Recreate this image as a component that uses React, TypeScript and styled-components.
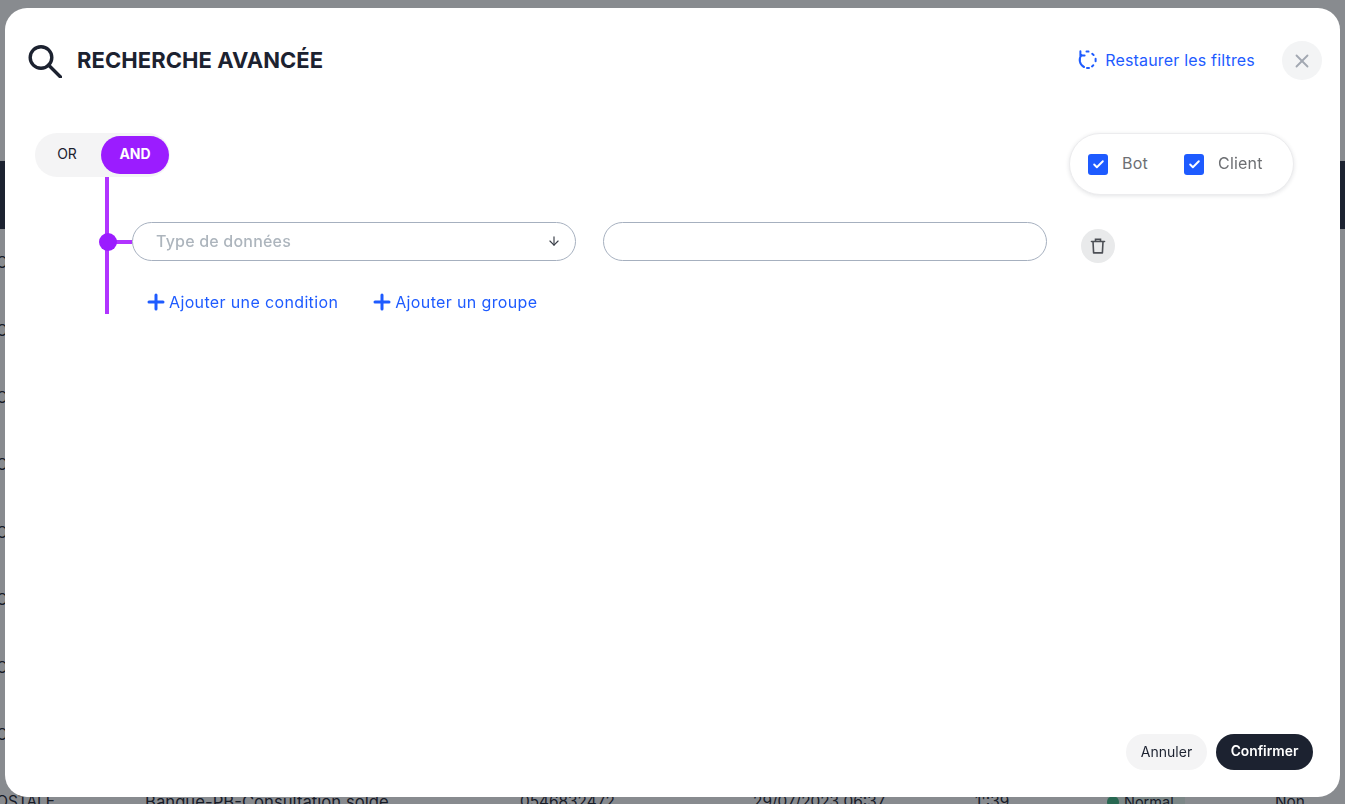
import React from 'react'
import styled, { createGlobalStyle } from 'styled-components'
import { ArrowDown, Check, Plus, X } from 'lucide-react'

const GlobalStyle = createGlobalStyle`
  html, body {
    margin: 0;
    height: 100%;
    overflow: hidden;
    background: #fff;
    font-family: Inter, "Open Sans", sans-serif;
    color: #1c2230;
  }
  * { box-sizing: border-box; }
`

const Page = styled.div`
  padding-top: 161px;
  height: 804px;
  overflow: hidden;
`

const TableHead = styled.div`
  position: relative;
  z-index: 2;
  height: 68px;
  background: #1c2230;
  color: #b9c4d6;
  font-size: 15px;
  display: flex;
  align-items: center;
`

const Row = styled.div`
  display: grid;
  grid-template-columns: 145px 375px 233px 222px 132px 168px 70px;
  align-items: center;
  height: 67.4px;
  font-size: 15.4px;
  white-space: nowrap;
`

const Clipped = styled.div`
  display: flex;
  justify-content: flex-end;
  width: 145px;
  overflow: hidden;
  padding-right: 90px;
`

const Service = styled.div`
  font-size: 16.7px;
`

const Status = styled.div`
  display: flex;
  align-items: center;
  gap: 5px;
  width: 78px;
  font-size: 14.5px;
  background: #e6f6ef;
  border-radius: 4px;
  &::before {
    content: '';
    width: 12px;
    height: 12px;
    border-radius: 50%;
    background: #3fb984;
  }
`

const Backdrop = styled.div`
  position: fixed;
  inset: 0;
  z-index: 1;
  background: rgba(17, 23, 31, 0.5);
`

const Overlay = styled.div`
  position: fixed;
  inset: 0;
  z-index: 3;
  padding: 8px 5px 7px;
`

const Dialog = styled.div`
  height: 100%;
  background: #fff;
  border-radius: 22px;
  display: flex;
  flex-direction: column;
`

const Header = styled.header`
  display: flex;
  align-items: center;
  padding: 33px 18px 0 23px;
`

const Title = styled.h1`
  margin: 0 0 2px 15px;
  font-size: 22px;
  font-weight: 700;
  letter-spacing: 0.06px;
  color: #1c2230;
  flex: 1;
`

const Restore = styled.button`
  display: flex;
  align-items: center;
  gap: 8px;
  border: 0;
  padding: 0 0 2px;
  background: none;
  color: #1e5bff;
  font: 400 16px Inter, sans-serif;
  letter-spacing: 0.18px;
`

const CloseButton = styled.button`
  width: 40px;
  height: 39px;
  margin-left: 27px;
  border: 0;
  border-radius: 50%;
  padding: 0;
  display: grid;
  place-items: center;
  background: #f3f4f5;
  color: #a2a8b1;
`

const Body = styled.main`
  flex: 1;
  margin-top: 53px;
  padding: 0 46px 0 30px;
`

const TopRow = styled.div`
  display: flex;
  justify-content: space-between;
  align-items: flex-start;
  height: 44px;
`

const Toggle = styled.div`
  width: 135px;
  height: 44px;
  padding: 3px 1px 3px 0;
  border-radius: 22px;
  background: #f4f4f5;
  display: flex;
  justify-content: space-between;
`

const ToggleOption = styled.button<{ $active?: boolean }>`
  width: ${p => (p.$active ? '68px' : '64px')};
  border: 0;
  padding: 0 0 3px;
  border-radius: 19px;
  font: ${p => (p.$active ? 700 : 400)} 14px Inter, sans-serif;
  background: ${p => (p.$active ? '#9b1cff' : 'transparent')};
  color: ${p => (p.$active ? '#fff' : '#1c2230')};
`

const SourcePanel = styled.div`
  width: 225px;
  height: 62px;
  display: flex;
  align-items: center;
  padding-left: 18px;
  border: 1px solid #ececee;
  border-radius: 31px;
  background: #fff;
  box-shadow: 0 1px 4px rgba(28, 34, 48, 0.12);
`

const CheckLabel = styled.label`
  display: flex;
  align-items: center;
  gap: 14px;
  width: 96px;
  font-size: 16px;
  letter-spacing: 0.2px;
  color: #6d6f73;
`

const LabelText = styled.span`
  margin-top: -2px;
`

const CheckBox = styled.span`
  width: 20px;
  height: 21px;
  border-radius: 3px;
  background: #1e5bff;
  color: #fff;
  display: grid;
  place-items: center;
`

const Tree = styled.div`
  position: relative;
  height: 137px;
  margin-left: 70px;
  padding: 45px 0 0 23px;
  border-left: 4px solid #b134ff;
`

const Branch = styled.div`
  display: flex;
  align-items: flex-start;
  gap: 27px;
  position: relative;

  &::before {
    content: '';
    position: absolute;
    left: -23px;
    top: 18px;
    width: 23px;
    height: 4px;
    background: #b134ff;
  }
  &::after {
    content: '';
    position: absolute;
    left: -33px;
    top: 11px;
    width: 18px;
    height: 18px;
    border-radius: 50%;
    background: #9b1cff;
  }
`

const SelectBox = styled.div`
  width: 444px;
  height: 39px;
  display: flex;
  align-items: center;
  justify-content: space-between;
  padding: 0 14px 1px 23px;
  border: 1px solid #a6b0bf;
  border-radius: 20px;
  color: #adb5bd;
  font-size: 16px;
  font-weight: 500;
  letter-spacing: 0.2px;

  svg { color: #3a3f48; }
`

const TextInput = styled.input`
  width: 444px;
  height: 39px;
  padding: 0 23px;
  border: 1px solid #a6b0bf;
  border-radius: 20px;
  outline: 0;
  background: #fff;
`

const TrashButton = styled.button`
  width: 34px;
  height: 34px;
  margin: 7px 0 0 7px;
  border: 0;
  padding: 0;
  border-radius: 50%;
  background: #e9eaeb;
  color: #4c4f55;
  display: grid;
  place-items: center;
`

const Links = styled.div`
  display: flex;
  gap: 32px;
  padding-left: 12px;
  margin-top: 27px;
`

const AddLink = styled.button`
  display: flex;
  align-items: center;
  gap: 1px;
  height: 24px;
  border: 0;
  padding: 0;
  background: none;
  color: #1e5bff;
  font: 400 16px Inter, sans-serif;
  letter-spacing: 0.36px;
`

const Footer = styled.footer`
  display: flex;
  justify-content: flex-end;
  gap: 9px;
  padding: 0 27px 27px 0;
`

const FooterButton = styled.button<{ $primary?: boolean }>`
  height: 36px;
  width: ${p => (p.$primary ? '97px' : '81px')};
  border: 0;
  padding: 0 0 2px;
  border-radius: 18px;
  font: ${p => (p.$primary ? 600 : 400)} ${p => (p.$primary ? '13.8px' : '14px')} Inter, sans-serif;
  background: ${p => (p.$primary ? '#1c2230' : '#f4f4f5')};
  color: ${p => (p.$primary ? '#fff' : '#1c2230')};
`

const SearchIcon = () => (
  <svg width="34" height="34" viewBox="0 0 34 34" fill="none" stroke="#1c2230" strokeWidth="3.4">
    <circle cx="13" cy="13.5" r="10.8" />
    <path d="M20.5 21l12 12" strokeLinecap="round" />
  </svg>
)

const RestoreIcon = () => (
  <svg width="19" height="19" viewBox="0 0 19 19" fill="none" stroke="#1e5bff" strokeWidth="2" strokeLinecap="round" strokeLinejoin="round">
    <path d="M3.4 5A8 8 0 0 0 6 17" />
    <path d="M2.4 1.2v4.2h4.2" />
    <path d="M9 18h2M14 16.4l1.3-1.2M17.6 11.2v-2.4M15.6 5l-1.4-1.2M10.5 1.6l-2-.1" />
  </svg>
)

const TrashIcon = () => (
  <svg width="18" height="18" viewBox="0 0 18 18" fill="none" stroke="currentColor" strokeWidth="1.6">
    <path d="M2.5 4.5h13" strokeLinecap="round" />
    <path d="M6.5 4V2.4h5V4" />
    <path d="M4 4.5l.6 11.4h8.8L14 4.5" strokeLinejoin="round" />
  </svg>
)

const rows = Array.from({ length: 9 })

const App = () => (
  <>
    <GlobalStyle />
    <Page>
      <TableHead>
        <Clipped>Canal</Clipped>
      </TableHead>
      {rows.map((_, i) => (
        <Row key={i}>
          <Clipped>POSTALE</Clipped>
          <Service>Banque-PB-Consultation solde</Service>
          <div>0546832472</div>
          <div>29/07/2023 06:37</div>
          <div>1':39</div>
          <Status>Normal</Status>
          <div>Non</div>
        </Row>
      ))}
    </Page>
    <Backdrop />
    <Overlay>
      <Dialog>
        <Header>
          <SearchIcon />
          <Title>RECHERCHE AVANCÉE</Title>
          <Restore>
            <RestoreIcon />
            Restaurer les filtres
          </Restore>
          <CloseButton aria-label="Fermer">
            <X size={22} strokeWidth={2} />
          </CloseButton>
        </Header>
        <Body>
          <TopRow>
            <Toggle>
              <ToggleOption>OR</ToggleOption>
              <ToggleOption $active>AND</ToggleOption>
            </Toggle>
            <SourcePanel>
              <CheckLabel>
                <CheckBox>
                  <Check size={13} strokeWidth={3.5} />
                </CheckBox>
                <LabelText>Bot</LabelText>
              </CheckLabel>
              <CheckLabel>
                <CheckBox>
                  <Check size={13} strokeWidth={3.5} />
                </CheckBox>
                <LabelText>Client</LabelText>
              </CheckLabel>
            </SourcePanel>
          </TopRow>
          <Tree>
            <Branch>
              <SelectBox>
                Type de données
                <ArrowDown size={14} />
              </SelectBox>
              <TextInput />
              <TrashButton aria-label="Supprimer">
                <TrashIcon />
              </TrashButton>
            </Branch>
            <Links>
              <AddLink>
                <Plus size={24} strokeWidth={3} />
                Ajouter une condition
              </AddLink>
              <AddLink>
                <Plus size={24} strokeWidth={3} />
                Ajouter un groupe
              </AddLink>
            </Links>
          </Tree>
        </Body>
        <Footer>
          <FooterButton>Annuler</FooterButton>
          <FooterButton $primary>Confirmer</FooterButton>
        </Footer>
      </Dialog>
    </Overlay>
  </>
)

export default App
